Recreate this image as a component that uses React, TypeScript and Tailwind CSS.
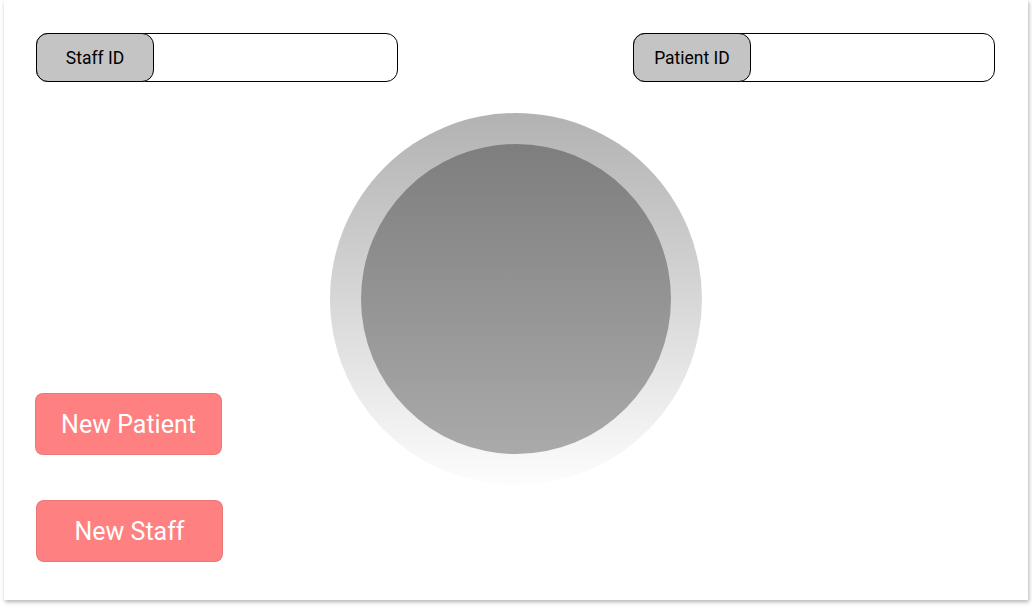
import React from "react";

function IdField({ label }: { label: string }) {
  return (
    <div className="flex h-[49px] w-[362px] rounded-[12px] border border-black bg-white">
      <div className="-m-px flex h-[49px] w-[118px] items-center justify-center rounded-[12px] border border-black bg-[#c4c4c4] pt-[2px] text-[17.5px] text-black">
        {label}
      </div>
    </div>
  );
}

export default function App() {
  return (
    <div
      className="h-[608px] w-[1032px] overflow-hidden bg-white"
      style={{ fontFamily: "Roboto, 'Liberation Sans', sans-serif" }}
    >
      <div className="ml-[4px] h-[600px] w-[1024px] bg-white pl-[32px] pr-[33px] pt-[33px] shadow-[1px_2px_4px_rgba(0,0,0,0.3)]">
        <div className="flex justify-between">
          <IdField label="Staff ID" />
          <IdField label="Patient ID" />
        </div>
        <div className="mt-[31px] grid grid-cols-[1fr_auto_1fr]">
          <div className="flex flex-col items-start gap-[45px] pt-[280px]">
            <button className="-ml-px h-[62px] w-[187px] rounded-[8px] border border-[rgba(0,0,0,0.08)] bg-[#ff8080] pt-[1px] text-[25px] text-white">
              New Patient
            </button>
            <button className="h-[62px] w-[187px] rounded-[8px] border border-[rgba(0,0,0,0.08)] bg-[#ff8080] pt-[1px] text-[25px] text-white">
              New Staff
            </button>
          </div>
          <div className="flex h-[372px] w-[372px] items-center justify-center rounded-full bg-gradient-to-b from-[#b2b2b2] to-[#fdfdfd]">
            <div className="h-[310px] w-[310px] rounded-full bg-gradient-to-b from-[#7e7e7e] to-[#aaaaaa]" />
          </div>
          <div />
        </div>
      </div>
    </div>
  );
}
